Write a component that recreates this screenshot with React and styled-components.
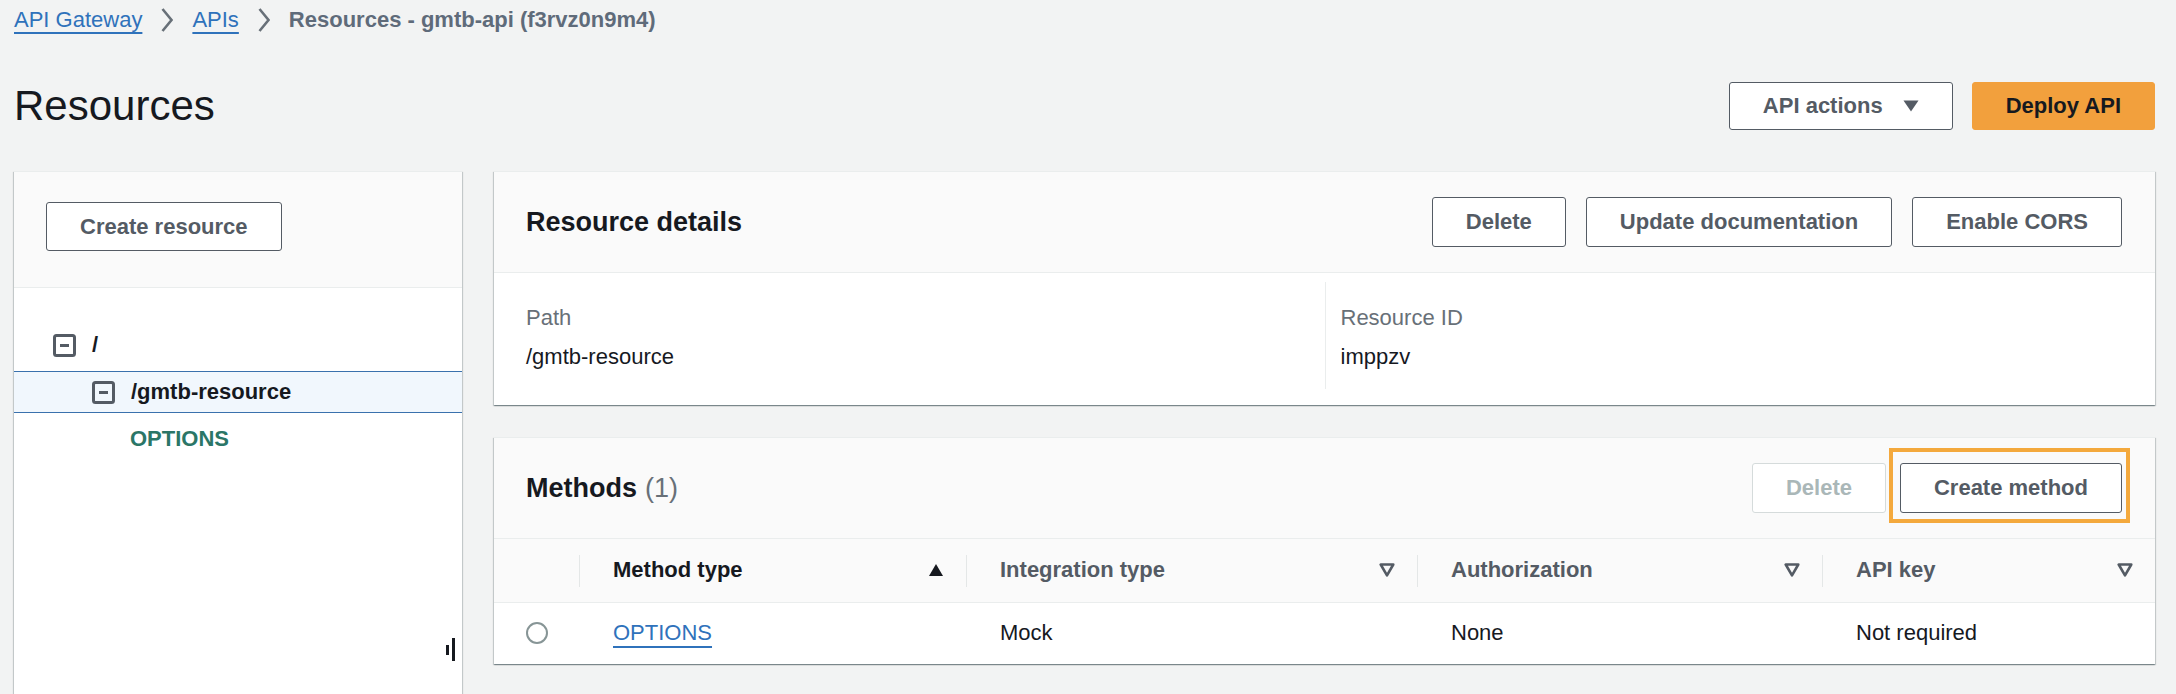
import React from "react";
import styled, { createGlobalStyle, css } from "styled-components";

const GlobalStyle = createGlobalStyle`
  *, *::before, *::after { box-sizing: border-box; }
  html, body { margin: 0; padding: 0; background: #f2f3f3; overflow: hidden; }
  body {
    font-family: "Liberation Sans", Arial, sans-serif;
    font-size: 22px;
    color: #16191f;
  }
`;

const Page = styled.div`
  padding: 8px 21px 0 14px;
  min-height: 694px;
`;

const Breadcrumbs = styled.nav`
  display: flex;
  align-items: center;
  gap: 19px;
  height: 24px;
  line-height: 24px;
`;

const CrumbLink = styled.a`
  color: #2f72bb;
  text-decoration: underline;
  text-decoration-thickness: 2px;
  text-underline-offset: 5px;
  cursor: pointer;
`;

const CrumbCurrent = styled.span`
  font-weight: 700;
  color: #5f6b7a;
`;

const TitleRow = styled.div`
  display: flex;
  align-items: center;
  justify-content: space-between;
  height: 48px;
  margin-top: 50px;
`;

const Title = styled.h1`
  margin: 0;
  font-size: 42px;
  font-weight: 400;
  line-height: 48px;
  color: #16191f;
`;

const ButtonGroup = styled.div`
  display: flex;
  align-items: center;
  gap: ${(p) => p.$gap || 20}px;
`;

const Button = styled.button`
  display: inline-flex;
  align-items: center;
  justify-content: center;
  gap: 20px;
  height: ${(p) => p.$h || 50}px;
  padding: 0 33px;
  font-family: inherit;
  font-size: 22px;
  font-weight: 700;
  line-height: 1;
  white-space: nowrap;
  border-radius: 3px;
  border: 1px solid #545b64;
  background: #fff;
  color: #545b64;
  cursor: pointer;
  ${(p) =>
    p.$variant === "primary" &&
    css`
      background: #f2a03d;
      border-color: #f2a03d;
      color: #16191f;
    `}
  ${(p) =>
    p.$variant === "disabled" &&
    css`
      border-color: #d5dbdb;
      color: #aab7b8;
      cursor: default;
    `}
`;

const Highlight = styled.div`
  position: relative;
  display: flex;
`;

const HighlightFrame = styled.span`
  position: absolute;
  top: -15px;
  left: -11px;
  right: -8px;
  bottom: -10px;
  border: 4px solid #f4a93d;
  pointer-events: none;
`;

const Main = styled.div`
  display: grid;
  grid-template-columns: 448px 1fr;
  gap: 32px;
  margin-top: 41px;
  align-items: start;
`;

const panelShadow = css`
  background: #fff;
  border-top: 1px solid #eaeded;
  box-shadow: 0 1px 1px 0 rgba(0, 28, 36, 0.3),
    1px 1px 1px 0 rgba(0, 28, 36, 0.15),
    -1px 1px 1px 0 rgba(0, 28, 36, 0.15);
`;

const Side = styled.aside`
  ${panelShadow}
  position: relative;
  min-height: 540px;
`;

const SideHeader = styled.div`
  background: #fafafa;
  border-bottom: 1px solid #eaeded;
  padding: 30px 31px 36px 32px;
`;

const Tree = styled.ul`
  list-style: none;
  margin: 0;
  padding: 36px 0 0;
  display: flex;
  flex-direction: column;
  gap: 5px;
`;

const TreeRow = styled.li`
  display: flex;
  align-items: center;
  gap: 16px;
  height: 42px;
  padding-left: ${(p) => p.$indent}px;
  font-weight: 700;
  color: ${(p) => (p.$method ? "#2b7667" : "#16191f")};
  ${(p) =>
    p.$selected &&
    css`
      background: #f1f7fd;
      border-top: 1px solid #3a71ad;
      border-bottom: 1px solid #3a71ad;
    `}
`;

const Grip = styled.div`
  position: absolute;
  right: 7px;
  top: 466px;
  display: flex;
  align-items: center;
  gap: 3px;
`;

const GripBar = styled.span`
  width: 3px;
  height: ${(p) => p.$h}px;
  background: #16191f;
`;

const Cards = styled.div`
  display: flex;
  flex-direction: column;
  gap: 32px;
`;

const Card = styled.section`
  ${panelShadow}
`;

const CardHeader = styled.div`
  display: flex;
  align-items: center;
  justify-content: space-between;
  min-height: 101px;
  padding: 0 33px 0 32px;
  background: #fafafa;
  border-bottom: 1px solid #eaeded;
`;

const CardTitle = styled.h2`
  margin: 0;
  font-size: 27px;
  font-weight: 700;
  color: #16191f;
`;

const Count = styled.span`
  font-weight: 400;
  color: #687078;
  margin-left: 8px;
`;

const DetailsBody = styled.div`
  display: grid;
  grid-template-columns: 1fr 1fr;
  padding: 9px 32px 16px;
`;

const DetailCol = styled.div`
  padding: 19px 0 16px;
  ${(p) =>
    p.$divider &&
    css`
      border-left: 1px solid #eaeded;
      padding-left: 15px;
    `}
`;

const DetailLabel = styled.div`
  color: #687078;
  line-height: 33px;
  margin-bottom: 6px;
`;

const DetailValue = styled.div`
  color: #16191f;
  line-height: 33px;
`;

const Table = styled.table`
  width: 100%;
  border-collapse: collapse;
  table-layout: fixed;
`;

const Th = styled.th`
  position: relative;
  height: 63px;
  padding: 0 22px 0 34px;
  background: #fafafa;
  border-bottom: 1px solid #eaeded;
  text-align: left;
  font-size: 22px;
  font-weight: 700;
  color: ${(p) => (p.$active ? "#16191f" : "#545b64")};
  ${(p) =>
    p.$sep &&
    css`
      &::before {
        content: "";
        position: absolute;
        left: 0;
        top: 16px;
        width: 1px;
        height: 32px;
        background: #e4e7e7;
      }
    `}
`;

const HeadInner = styled.div`
  display: flex;
  align-items: center;
  justify-content: space-between;
`;

const Td = styled.td`
  height: 62px;
  padding: 0 22px 0 ${(p) => (p.$radio ? 32 : 34)}px;
  color: #16191f;
  vertical-align: middle;
`;

const Radio = styled.span`
  display: block;
  width: 22px;
  height: 22px;
  border-radius: 50%;
  border: 2px solid #879596;
  background: #fff;
`;

const TableLink = styled.a`
  color: #2f72bb;
  text-decoration: underline;
  text-decoration-thickness: 2px;
  text-underline-offset: 6px;
  cursor: pointer;
`;

const Chevron = () => (
  <svg width="12" height="24" viewBox="0 0 12 24" aria-hidden="true">
    <polyline
      points="1.5,1 10.5,12 1.5,23"
      fill="none"
      stroke="#687078"
      strokeWidth="2.6"
    />
  </svg>
);

const Caret = () => (
  <svg width="16" height="12" viewBox="0 0 16 12" aria-hidden="true">
    <polygon points="0.5,0.5 15.5,0.5 8,11.5" fill="#545b64" />
  </svg>
);

const MinusBox = () => (
  <svg width="23" height="23" viewBox="0 0 23 23" aria-hidden="true">
    <rect
      x="1.5"
      y="1.5"
      width="20"
      height="20"
      rx="2"
      fill="none"
      stroke="#545b64"
      strokeWidth="3"
    />
    <line x1="7" y1="11.5" x2="16" y2="11.5" stroke="#545b64" strokeWidth="3" />
  </svg>
);

const SortUp = () => (
  <svg width="16" height="14" viewBox="0 0 16 14" aria-hidden="true">
    <polygon points="8,1 15,13 1,13" fill="#16191f" />
  </svg>
);

const SortDown = () => (
  <svg width="16" height="14" viewBox="0 0 16 14" aria-hidden="true">
    <polygon
      points="1.7,1.5 14.3,1.5 8,12.3"
      fill="none"
      stroke="#545b64"
      strokeWidth="2.6"
      strokeLinejoin="round"
    />
  </svg>
);

const columns = [
  { label: "Method type", active: true },
  { label: "Integration type" },
  { label: "Authorization" },
  { label: "API key" },
];

export default function App() {
  return (
    <>
      <GlobalStyle />
      <Page>
        <Breadcrumbs>
          <CrumbLink>API Gateway</CrumbLink>
          <Chevron />
          <CrumbLink>APIs</CrumbLink>
          <Chevron />
          <CrumbCurrent>Resources - gmtb-api (f3rvz0n9m4)</CrumbCurrent>
        </Breadcrumbs>

        <TitleRow>
          <Title>Resources</Title>
          <ButtonGroup $gap={19}>
            <Button $h={48}>
              API actions
              <Caret />
            </Button>
            <Button $h={48} $variant="primary">
              Deploy API
            </Button>
          </ButtonGroup>
        </TitleRow>

        <Main>
          <Side>
            <SideHeader>
              <Button $h={49}>Create resource</Button>
            </SideHeader>
            <Tree>
              <TreeRow $indent={39}>
                <MinusBox />/
              </TreeRow>
              <TreeRow $indent={78} $selected>
                <MinusBox />
                /gmtb-resource
              </TreeRow>
              <TreeRow $indent={116} $method>
                OPTIONS
              </TreeRow>
            </Tree>
            <Grip>
              <GripBar $h={10} />
              <GripBar $h={23} />
            </Grip>
          </Side>

          <Cards>
            <Card>
              <CardHeader>
                <CardTitle>Resource details</CardTitle>
                <ButtonGroup $gap={20}>
                  <Button>Delete</Button>
                  <Button>Update documentation</Button>
                  <Button>Enable CORS</Button>
                </ButtonGroup>
              </CardHeader>
              <DetailsBody>
                <DetailCol>
                  <DetailLabel>Path</DetailLabel>
                  <DetailValue>/gmtb-resource</DetailValue>
                </DetailCol>
                <DetailCol $divider>
                  <DetailLabel>Resource ID</DetailLabel>
                  <DetailValue>imppzv</DetailValue>
                </DetailCol>
              </DetailsBody>
            </Card>

            <Card>
              <CardHeader>
                <CardTitle>
                  Methods<Count>(1)</Count>
                </CardTitle>
                <ButtonGroup $gap={14}>
                  <Button $variant="disabled">Delete</Button>
                  <Highlight>
                    <Button>Create method</Button>
                    <HighlightFrame />
                  </Highlight>
                </ButtonGroup>
              </CardHeader>
              <Table>
                <colgroup>
                  <col style={{ width: 85 }} />
                  <col style={{ width: 387 }} />
                  <col style={{ width: 451 }} />
                  <col style={{ width: 405 }} />
                  <col />
                </colgroup>
                <thead>
                  <tr>
                    <Th />
                    {columns.map((c) => (
                      <Th key={c.label} $sep $active={c.active}>
                        <HeadInner>
                          {c.label}
                          {c.active ? <SortUp /> : <SortDown />}
                        </HeadInner>
                      </Th>
                    ))}
                  </tr>
                </thead>
                <tbody>
                  <tr>
                    <Td $radio>
                      <Radio />
                    </Td>
                    <Td>
                      <TableLink>OPTIONS</TableLink>
                    </Td>
                    <Td>Mock</Td>
                    <Td>None</Td>
                    <Td>Not required</Td>
                  </tr>
                </tbody>
              </Table>
            </Card>
          </Cards>
        </Main>
      </Page>
    </>
  );
}
